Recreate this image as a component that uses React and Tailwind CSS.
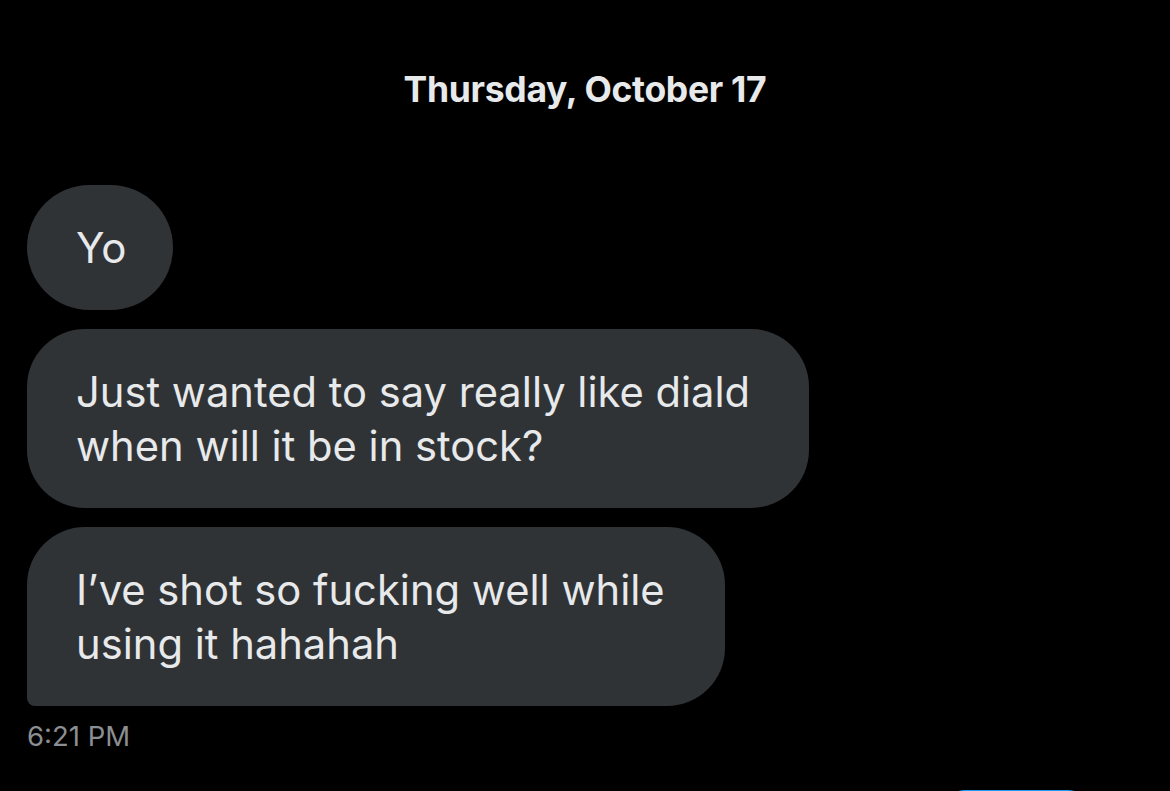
export default function App() {
  const font = { fontFamily: 'Inter, "Liberation Sans", sans-serif' };
  return (
    <div className="w-[1170px] h-[791px] overflow-hidden bg-black text-[#e7e9ea]" style={font}>
      <div className="pt-[67px] flex justify-center">
        <div className="text-[35.5px] leading-[46px] font-bold tracking-[-0.3px]">Thursday, October 17</div>
      </div>

      <div className="pl-[27px] pt-[72px] flex flex-col items-start gap-[19px]">
        <div className="w-[146px] rounded-full bg-[#303336] pl-[49px] py-[35.5px] text-[42px] leading-[54px]">Yo</div>

        <div className="w-[782px] rounded-[58px] bg-[#303336] pl-[49px] py-[35.5px] text-[41.7px] leading-[54px]">
          <div>Just wanted to say really like diald</div>
          <div>when will it be in stock?</div>
        </div>

        <div className="w-[698px] rounded-[58px] rounded-bl-[8px] bg-[#303336] pl-[49px] py-[35.5px] text-[41.7px] leading-[54px]">
          <div>I’ve shot so fucking well while</div>
          <div>using it hahahah</div>
        </div>
      </div>

      <div className="pl-[27px] pt-[12px] text-[27.5px] leading-[36px] text-[#8b8e92]">6:21 PM</div>

      <div className="flex justify-end pr-[80px] pt-[36px]">
        <div className="w-[147px] h-[44px] rounded-full bg-[#1d9bf0]"></div>
      </div>
    </div>
  );
}
